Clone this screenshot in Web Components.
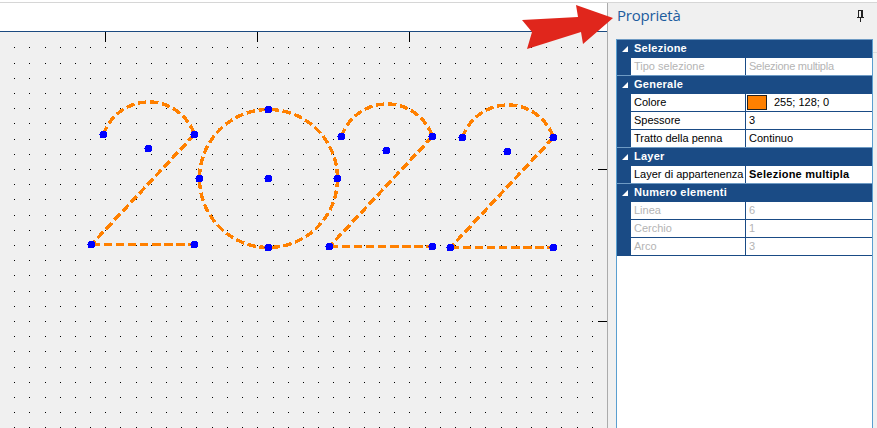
<!DOCTYPE html>
<html>
<head>
<meta charset="utf-8">
<style>
  html, body { margin: 0; height: 100%; overflow: hidden; background: #fff; }
</style>
</head>
<body>
<cad-app>
  <cad-drawing slot="canvas"></cad-drawing>
  <prop-panel slot="panel" title="Proprietà">
    <prop-group label="Selezione">
      <prop-row name="Tipo selezione" value="Selezione multipla" disabled tight></prop-row>
    </prop-group>
    <prop-group label="Generale">
      <prop-row name="Colore" value="255; 128; 0" swatch="#ff8000"></prop-row>
      <prop-row name="Spessore" value="3"></prop-row>
      <prop-row name="Tratto della penna" value="Continuo"></prop-row>
    </prop-group>
    <prop-group label="Layer">
      <prop-row name="Layer di appartenenza" value="Selezione multipla" strong></prop-row>
    </prop-group>
    <prop-group label="Numero elementi">
      <prop-row name="Linea" value="6" disabled></prop-row>
      <prop-row name="Cerchio" value="1" disabled></prop-row>
      <prop-row name="Arco" value="3" disabled></prop-row>
    </prop-group>
  </prop-panel>
</cad-app>
<script>
class CadApp extends HTMLElement {
  constructor() {
    super();
    this.attachShadow({ mode: 'open' });
    this.shadowRoot.innerHTML = `
      <style>
        :host { display: flex; position: relative; width: 877px; height: 428px; overflow: hidden; background: #fff; }
        .left { width: 607px; flex: none; display: flex; flex-direction: column; }
        .top { height: 2px; flex: none; background: #fff; }
        .sep { height: 1px; flex: none; background: #d6d6d6; }
        .ruler { height: 28px; flex: none; background: #fff; border-bottom: 1px solid #1b4a80; }
        .right { flex: 1; display: flex; flex-direction: column; min-width: 0; }
        .arrow { position: absolute; left: 520px; top: 3px; }
      </style>
      <div class="left">
        <div class="top"></div><div class="sep"></div>
        <div class="ruler"></div>
        <slot name="canvas"></slot>
      </div>
      <div class="right">
        <div class="top"></div><div class="sep"></div>
        <slot name="panel"></slot>
      </div>
      <svg class="arrow" width="96" height="48" viewBox="520 3 96 48">
        <polygon fill="#e0261c" points="522,20 578,17 576,5 613,18 583,44 581,32 527,49 532,32"/>
      </svg>`;
  }
}

class CadDrawing extends HTMLElement {
  constructor() {
    super();
    this.attachShadow({ mode: 'open' });
    let dots = '';
    for (let j = 0; j < 26; j++) {
      for (let i = 0; i < 39; i++) {
        const x = Math.round(14.1 + 15.2 * i), y = Math.round(47.4 + 15.2 * j);
        dots += `<rect x="${x}" y="${y - 32}" width="1" height="1" fill="#000"/>`;
      }
    }
    let ticks = '';
    for (const x of [105, 257, 409]) ticks += `<rect x="${x}" y="0" width="1" height="10" fill="#000"/>`;
    for (const y of [169, 321]) ticks += `<rect x="598" y="${y - 32}" width="9" height="1" fill="#000"/>`;

    let shapes = '', handles = [];
    const line = (a, b) => {
      shapes += `<line x1="${a[0]}" y1="${a[1]}" x2="${b[0]}" y2="${b[1]}"/>`;
    };
    // a "2": arc, diagonal and base
    const two = (l, r, c, b) => {
      const rad = Math.hypot(r[0] - c[0], r[1] - c[1]);
      shapes += `<path d="M${l[0]} ${l[1]}A${rad} ${rad} 0 0 1 ${r[0]} ${r[1]}"/>`;
      line(r, b);
      line(b, [r[0], b[1]]);
      handles.push(l, r, c, b, [r[0], b[1]]);
    };
    two([103.5, 134.5], [194.5, 134.5], [148.5, 148.5], [91.5, 244.5]);
    two([341.5, 136.5], [432.5, 136.5], [386.5, 150.5], [329.5, 246.5]);
    two([462.5, 137.5], [553.5, 137.5], [507.5, 151.5], [450.5, 247.5]);
    shapes += `<circle cx="268.5" cy="178.5" r="69"/>`;
    handles.push([268.5, 178.5], [268.5, 109.5], [268.5, 247.5], [199.5, 178.5], [337.5, 178.5]);

    const marks = handles.map(p => `<circle cx="${p[0]}" cy="${p[1]}" r="4"/><rect x="${p[0] - 4.5}" y="${p[1] - 0.5}" width="1" height="1"/>`).join('');

    this.shadowRoot.innerHTML = `
      <style>
        :host { display: block; flex: 1; min-height: 0; background: #f0f0f0; }
        svg { display: block; }
      </style>
      <svg width="607" height="396" viewBox="0 0 607 396">
        <g shape-rendering="crispEdges">${dots}${ticks}</g>
        <g transform="translate(0,-32)">
          <g fill="none" stroke="#ff8000" stroke-width="3.4" stroke-dasharray="8.5 3.6" shape-rendering="crispEdges">${shapes}</g>
          <g fill="#0000ff" shape-rendering="crispEdges">${marks}</g>
        </g>
      </svg>`;
  }
}

class PropPanel extends HTMLElement {
  constructor() {
    super();
    this.attachShadow({ mode: 'open' });
    this.shadowRoot.innerHTML = `
      <style>
        :host { display: flex; flex-direction: column; box-sizing: border-box; height: 425px; background: linear-gradient(#dcdcdc, #dcdcdc) no-repeat right 0 top 49px / 4px 1px, #f0f0f0; border-left: 1px solid #ababab; padding: 0 4px 0 8px; font-family: "Liberation Sans", Arial, sans-serif; }
        header { flex: none; height: 36px; display: flex; align-items: flex-start; justify-content: space-between; }
        h1 { margin: 1px 0 0 1px; font: 400 15px/22px "Open Sans", sans-serif; letter-spacing: -.2px; color: #1c5c9e; }
        svg { margin: 7px 8px 0 0; }
        .grid { flex: 1; min-height: 0; background: #fff; border-left: 1px solid #5a9fd0; border-right: 1px solid #5a9fd0; }
      </style>
      <header>
        <h1></h1>
        <svg width="9" height="12" viewBox="0 0 9 12" shape-rendering="crispEdges" fill="#222">
          <rect x="2" y="0" width="5" height="1"/><rect x="2" y="1" width="1" height="6"/><rect x="5" y="1" width="2" height="6"/>
          <rect x="1" y="7" width="7" height="1"/><rect x="4" y="8" width="1" height="4"/>
        </svg>
      </header>
      <div class="grid"><slot></slot></div>`;
    this.shadowRoot.querySelector('h1').textContent = this.getAttribute('title');
  }
}

class PropGroup extends HTMLElement {
  constructor() {
    super();
    this.attachShadow({ mode: 'open' });
    this.shadowRoot.innerHTML = `
      <style>
        :host { display: block; background: #1a4b85; border-top: 1px solid #6f9bc4; }
        :host(:last-child) { border-bottom: 1px solid #1a4b85; }
        .head { height: 18px; box-sizing: border-box; padding-bottom: 3px; display: flex; align-items: center; color: #fff; font-size: 11px; font-weight: 700; letter-spacing: .25px; }
        svg { margin: 2px 6px 0 5px; flex: none; }
      </style>
      <div class="head">
        <svg width="6" height="6" viewBox="0 0 6 6"><polygon points="6,0 6,6 0,6" fill="#fff"/></svg>
        <span></span>
      </div>
      <slot></slot>`;
    this.shadowRoot.querySelector('span').textContent = this.getAttribute('label');
  }
}

class PropRow extends HTMLElement {
  constructor() {
    super();
    this.attachShadow({ mode: 'open' });
    const swatch = this.getAttribute('swatch');
    this.shadowRoot.innerHTML = `
      <style>
        :host { display: flex; height: 18px; box-sizing: border-box; padding-left: 14px; border-bottom: 1px solid #1a4b85; font-size: 11px; color: #000; }
        :host([disabled]) { color: #b4b4b4; }
        :host(:last-child) { height: 17px; border-bottom: 0; }
        .name, .value { background: #fff; display: flex; align-items: center; box-sizing: border-box; }
        .name { width: 114px; padding: 0 0 2px 3px; flex: none; white-space: nowrap; overflow: hidden; }
        .value { flex: 1; margin-left: 1px; padding-left: 3px; white-space: nowrap; }
        .value span { margin-bottom: 2px; }
        :host([strong]) .value { font-weight: 700; letter-spacing: .25px; }
        :host([tight]) .value { letter-spacing: -.25px; }
        i { width: 20px; height: 15px; box-sizing: border-box; border: 1px solid #222; margin: 0 7px 0 -2px; flex: none; }
      </style>
      <div class="name"></div>
      <div class="value">${swatch ? `<i style="background:${swatch}"></i>` : ''}<span></span></div>`;
    this.shadowRoot.querySelector('.name').textContent = this.getAttribute('name');
    this.shadowRoot.querySelector('span').textContent = this.getAttribute('value');
  }
}

customElements.define('cad-app', CadApp);
customElements.define('cad-drawing', CadDrawing);
customElements.define('prop-panel', PropPanel);
customElements.define('prop-group', PropGroup);
customElements.define('prop-row', PropRow);
</script>
</body>
</html>
